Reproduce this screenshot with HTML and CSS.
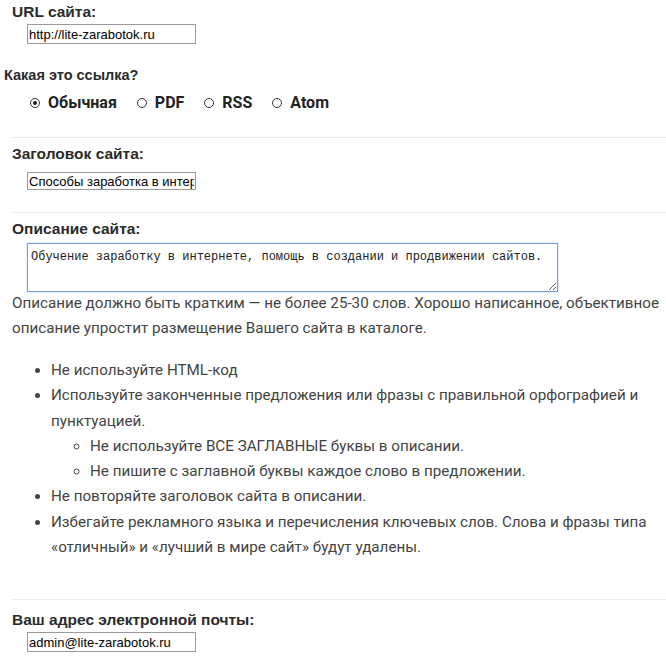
FILE: index.html
```html
<!DOCTYPE html>
<html lang="ru">
<head>
    <meta charset="UTF-8">
    <meta name="viewport" content="width=device-width, initial-scale=1.0">
    <title>Добавить сайт</title>
    <link rel="stylesheet" href="styles.css">
</head>
<body>
    <form class="site-form">
        <div class="field field-url">
            <label class="field-label">URL сайта:</label>
            <input class="text-input" type="text" value="http://lite-zarabotok.ru">
        </div>

        <div class="field field-type">
            <div class="field-label">Какая это ссылка?</div>
            <div class="radio-row">
                <span class="radio-item"><span class="radio checked"></span>Обычная</span>
                <span class="radio-item"><span class="radio"></span>PDF</span>
                <span class="radio-item"><span class="radio"></span>RSS</span>
                <span class="radio-item"><span class="radio"></span>Atom</span>
            </div>
        </div>

        <hr class="divider divider-type">

        <div class="field">
            <label class="field-label">Заголовок сайта:</label>
            <input class="text-input short" type="text" value="Способы заработка в интернете">
        </div>

        <hr class="divider divider-title">

        <div class="field">
            <label class="field-label">Описание сайта:</label>
            <textarea class="text-area">Обучение заработку в интернете, помощь в создании и продвижении сайтов.</textarea>
            <p class="hint">Описание должно быть кратким — не более 25-30 слов. Хорошо написанное, объективное описание упростит размещение Вашего сайта в каталоге.</p>
            <ul class="rules">
                <li>Не используйте HTML-код</li>
                <li>Используйте законченные предложения или фразы с правильной орфографией и пунктуацией.
                    <ul>
                        <li>Не используйте ВСЕ ЗАГЛАВНЫЕ буквы в описании.</li>
                        <li>Не пишите с заглавной буквы каждое слово в предложении.</li>
                    </ul>
                </li>
                <li>Не повторяйте заголовок сайта в описании.</li>
                <li>Избегайте рекламного языка и перечисления ключевых слов. Слова и фразы типа «отличный» и «лучший в мире сайт» будут удалены.</li>
            </ul>
        </div>

        <hr class="divider divider-email">

        <div class="field field-email">
            <label class="field-label">Ваш адрес электронной почты:</label>
            <input class="text-input" type="text" value="admin@lite-zarabotok.ru">
        </div>
    </form>
</body>
</html>
```

FILE: styles.css
```css
body {
    margin: 0;
    background-color: #fff;
    font-family: "Liberation Sans", Arial, sans-serif;
    color: #333;
}

.field {
    padding-left: 12px;
}

.field-label {
    display: block;
    font-size: 15.5px;
    line-height: 18px;
    font-weight: bold;
    color: #2b2b2b;
}

.text-input {
    display: block;
    box-sizing: border-box;
    width: 169px;
    height: 20px;
    margin: 3px 0 0 15px;
    padding: 0 1px;
    border: 1px solid #9a9a9a;
    font-family: "Liberation Sans", Arial, sans-serif;
    font-size: 13px;
    color: #000;
}

.text-input.short {
    height: 18px;
    margin-top: 9px;
}

.field-url {
    padding-top: 3px;
}

.field-type {
    padding-left: 4px;
    margin-top: 22px;
}

.field-type .field-label {
    font-size: 14.5px;
}

.radio-row {
    display: flex;
    align-items: center;
    gap: 20px;
    margin: 10px 0 0 26px;
    font-family: Roboto, sans-serif;
    font-weight: bold;
    font-size: 16px;
    line-height: 18px;
    color: #222;
}

.radio-item {
    display: flex;
    align-items: center;
    gap: 8px;
}

.radio {
    box-sizing: border-box;
    width: 10px;
    height: 10px;
    border: 1px solid #333;
    border-radius: 50%;
    display: flex;
    align-items: center;
    justify-content: center;
}

.radio.checked::after {
    content: "";
    width: 4px;
    height: 4px;
    border-radius: 50%;
    background-color: #222;
}

.divider {
    height: 1px;
    border: none;
    background-color: #ececec;
    margin: 0 0 7px 12px;
}

.divider-type {
    margin-top: 25px;
}

.divider-title {
    margin-top: 22px;
}

.divider-email {
    margin-top: 39px;
    margin-bottom: 11px;
}

.text-area {
    display: block;
    box-sizing: border-box;
    width: 531px;
    height: 49px;
    margin: 5px 0 0 15px;
    padding: 6px 3px 2px;
    border: 1px solid #7aa0dc;
    box-shadow: 0 0 2px #b5cdf2;
    font-family: "Liberation Mono", monospace;
    font-size: 12px;
    color: #222;
    resize: both;
    outline: none;
}

.hint {
    margin: -1px 0 0;
    font-family: Roboto, sans-serif;
    font-size: 15.2px;
    line-height: 25px;
    color: #444;
}

.rules {
    margin: 17px 0 0;
    padding-left: 39px;
    font-family: Roboto, sans-serif;
    font-size: 15.2px;
    line-height: 25.3px;
    color: #444;
}

.rules ul {
    margin: 0;
    padding-left: 39px;
    list-style: circle;
}
```
